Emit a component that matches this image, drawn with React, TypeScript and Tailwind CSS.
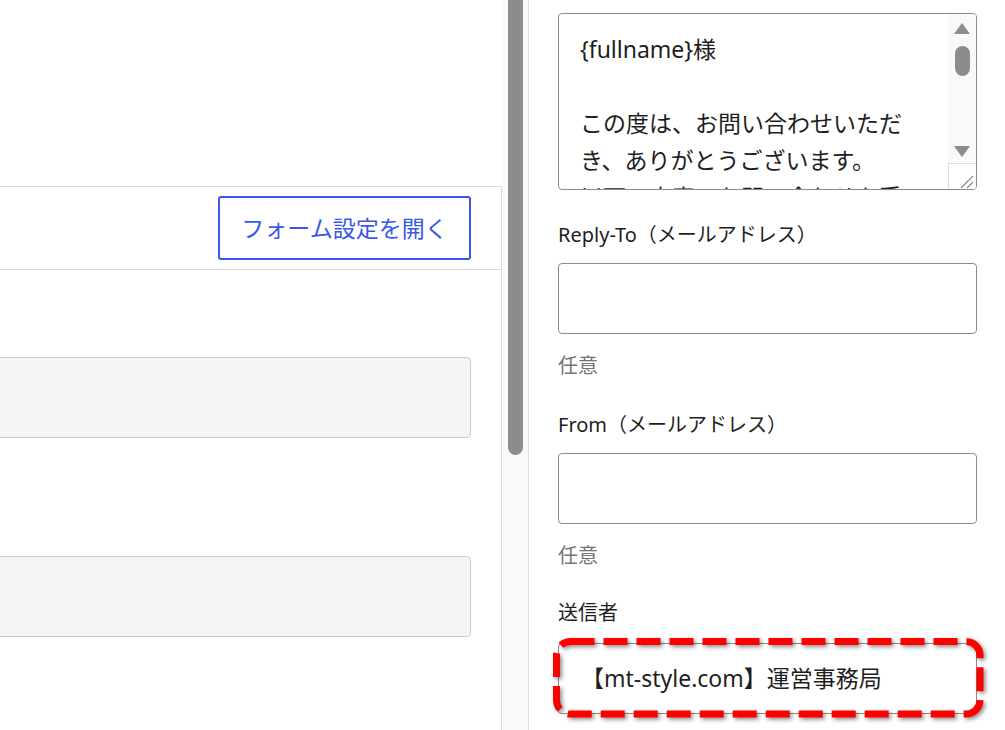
import React from "react";

const lines = [
  "{fullname}様",
  "",
  "この度は、お問い合わせいただ",
  "き、ありがとうございます。",
  "以下の内容でお問い合わせを受",
];

function FakeTextarea() {
  return (
    <div className="flex h-[177px] w-full overflow-hidden rounded-[4px] border border-[#8c8c8c] bg-white">
      <div className="flex-1 overflow-hidden pl-[21px] pt-[17px] text-[23px] leading-[37px] text-[#1e1e1e]">
        {lines.map((l, i) => (
          <div key={i} className="h-[37px] whitespace-nowrap">
            {l}
          </div>
        ))}
      </div>
      {/* custom scrollbar */}
      <div className="flex w-[28px] flex-col bg-[#f9f9f9]">
        <div className="flex h-[149px] flex-col items-center pt-[9px]">
          <svg width="16" height="11" viewBox="0 0 16 11">
            <path d="M8 0 L16 11 L0 11 Z" fill="#8c8c8c" />
          </svg>
          <div className="mt-[12px] h-[30px] w-[15px] rounded-full bg-[#8c8c8c]" />
          <div className="flex-1" />
          <svg width="16" height="11" viewBox="0 0 16 11" className="mb-[6px]">
            <path d="M0 0 L16 0 L8 11 Z" fill="#8c8c8c" />
          </svg>
        </div>
        <div className="relative flex-1 border-l border-t border-[#dcdcdc] bg-white">
          <svg width="27" height="27" viewBox="0 0 27 27" className="absolute inset-0">
            <path d="M24 12 L12 24 M24 18 L18 24" stroke="#8c8c8c" strokeWidth="1.2" />
          </svg>
        </div>
      </div>
    </div>
  );
}

function Input({ children }: { children?: React.ReactNode }) {
  return (
    <div className="flex h-[71px] w-full items-center rounded-[4px] border border-[#8c8c8c] bg-white pl-[22px] text-[23px] text-[#1e1e1e]">
      {children}
    </div>
  );
}

export default function App() {
  return (
    <div className="flex h-[730px] w-[1005px] overflow-hidden bg-white font-['Noto_Sans','Noto_Sans_CJK_JP',sans-serif]">
      {/* left main area */}
      <div className="flex w-[502px] flex-col">
        <div className="h-[186px] shrink-0" />
        <div className="flex flex-1 flex-col border-r border-t border-[#dcdcdc]">
          <div className="flex h-[83px] items-center justify-end border-b border-[#dcdcdc] pr-[30px]">
            <button className="h-[64px] w-[253px] rounded-[3px] border-2 border-[#3858e9] text-[23px] text-[#3858e9]">
              フォーム設定を開く
            </button>
          </div>
          <div className="-ml-[40px] flex flex-col pr-[30px] pt-[87px]">
            <div className="h-[81px] rounded-[4px] border border-[#cccccc] bg-[#f5f5f5]" />
            <div className="mt-[118px] h-[81px] rounded-[4px] border border-[#cccccc] bg-[#f5f5f5]" />
          </div>
        </div>
      </div>

      {/* page scrollbar */}
      <div className="w-[27px] shrink-0 border-r border-[#dcdcdc] bg-[#f9f9f9] pl-[6px]">
        <div className="h-[455px] w-[15px] rounded-b-full bg-[#8c8c8c]" />
      </div>

      {/* right settings panel */}
      <div className="flex flex-1 flex-col pl-[29px] pr-[28px] pt-[13px]">
        <FakeTextarea />

        <div className="mt-[31px] text-[20px] leading-[28px] text-[#1e1e1e]">
          Reply-To（メールアドレス）
        </div>
        <div className="mt-[14px]">
          <Input />
        </div>
        <div className="mt-[18px] text-[20px] leading-[28px] text-[#757575]">任意</div>

        <div className="mt-[31px] text-[20px] leading-[28px] text-[#1e1e1e]">
          From（メールアドレス）
        </div>
        <div className="mt-[14px]">
          <Input />
        </div>
        <div className="mt-[18px] text-[20px] leading-[28px] text-[#757575]">任意</div>

        <div className="mt-[29px] text-[20px] leading-[28px] text-[#1e1e1e]">送信者</div>
        <div className="relative mt-[16px]">
          <Input>【mt-style.com】運営事務局</Input>
          {/* highlight annotation */}
          <svg
            width="440"
            height="92"
            viewBox="0 0 440 92"
            className="pointer-events-none absolute -left-[8px] -top-[12px] drop-shadow-[2px_2px_2px_rgba(0,0,0,0.45)]"
          >
            <rect
              x="6.5"
              y="10.5"
              width="423.5"
              height="72.5"
              rx="14"
              fill="none"
              stroke="#ff0000"
              strokeWidth="7"
              strokeDasharray="24 9"
            />
          </svg>
        </div>
      </div>
    </div>
  );
}
